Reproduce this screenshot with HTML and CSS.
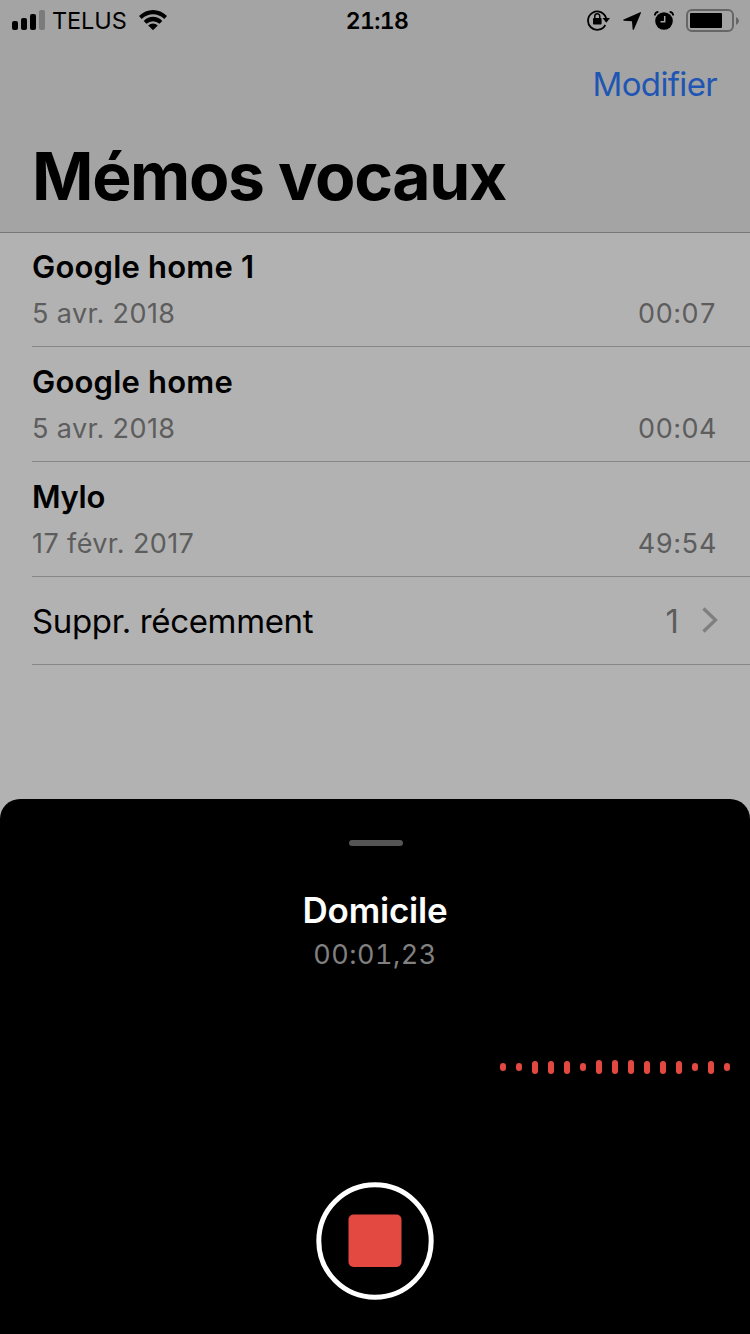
FILE: index.html
```html
<!DOCTYPE html>
<html lang="fr">
<head>
<meta charset="utf-8">
<title>Mémos vocaux</title>
<link rel="stylesheet" href="styles.css">
</head>
<body>
<div class="screen">
  <header class="header">
    <div class="status">
      <div class="status-left">
        <svg class="signal" width="34" height="20" viewBox="0 0 34 20">
          <rect x="0" y="11" width="6" height="9" rx="2"/>
          <rect x="9" y="8" width="6" height="12" rx="2"/>
          <rect x="18" y="4" width="6" height="16" rx="2"/>
          <rect x="27" y="0" width="6" height="20" rx="2" fill="#7b7b7b"/>
        </svg>
        <span class="carrier">TELUS</span>
        <svg class="wifi" width="28" height="20" viewBox="0 0 28 20">
          <path d="M0 6Q6 0 14 0T28 6L25.300 8.900Q20 4.300 14 4.300T2.700 8.900Z"/>
          <path d="M4.700 10.900Q8.800 6.800 14 6.800T23.300 10.900L20.500 13.800Q17.500 11.200 14 11.200T7.500 13.800Z"/>
          <path d="M9.200 15.500Q11.300 13.500 14 13.500T18.800 15.500L14 20.200Z"/>
        </svg>
      </div>
      <span class="clock">21:18</span>
      <div class="status-right">
        <svg class="lock" width="24" height="22" viewBox="0 0 24 22">
          <path d="M18.300 16A9.200 9.200 0 1 1 19.100 9.300" fill="none" stroke="#000" stroke-width="1.800"/>
          <path d="M15.500 9.100H23L19.300 13.700Z"/>
          <rect x="6" y="9" width="8.600" height="6.500" rx="1"/>
          <path d="M7.800 9.500V7.300a2.500 2.500 0 0 1 5 0V9.500" fill="none" stroke="#000" stroke-width="1.500"/>
        </svg>
        <svg class="location" width="18" height="18" viewBox="0 0 18 18">
          <path d="M17.200.300Q18.400-.200 17.900 1L11 17.300Q10 18.700 9.600 17L9 9.200 1 8.700Q-.800 8.200.700 7.400Z"/>
        </svg>
        <svg class="alarm" width="20" height="19" viewBox="0 0 20 19">
          <circle cx="10" cy="10" r="8.800"/>
          <path d="M.8 4.500Q1 1.200 4.400.9M15.600.9Q19 1.200 19.200 4.500" fill="none" stroke="#000" stroke-width="1.800"/>
          <path d="M10.700 5V10.800H6.500" fill="none" stroke="#a4a4a4" stroke-width="1.500"/>
        </svg>
        <svg class="battery" width="53" height="24" viewBox="0 0 53 24">
          <rect x="1" y="1" width="46" height="21" rx="5" fill="none" stroke="#666" stroke-width="2"/>
          <rect x="4" y="4" width="32" height="15" rx="1"/>
          <path d="M50 8Q53 9.500 53 12T50 16Z" fill="#666"/>
        </svg>
      </div>
    </div>
    <div class="nav"><span class="edit">Modifier</span></div>
    <h1 class="title">Mémos vocaux</h1>
  </header>

  <main class="list">
    <div class="memo">
      <div class="name">Google home 1</div>
      <div class="meta"><span class="date">5 avr. 2018</span><span class="length">00:07</span></div>
    </div>
    <div class="memo">
      <div class="name">Google home</div>
      <div class="meta"><span class="date">5 avr. 2018</span><span class="length">00:04</span></div>
    </div>
    <div class="memo">
      <div class="name name-tight">Mylo</div>
      <div class="meta"><span class="date">17 févr. 2017</span><span class="length">49:54</span></div>
    </div>
    <div class="deleted">
      <span class="deleted-label">Suppr. récemment</span>
      <span class="count">1</span>
      <svg class="chevron" width="16" height="26" viewBox="0 0 16 26"><path d="M1.500 1.500L13.500 13L1.500 24.500" fill="none" stroke="#7f7f7f" stroke-width="3.300"/></svg>
    </div>
  </main>

  <section class="sheet">
    <div class="grabber"></div>
    <h2 class="recording">Domicile</h2>
    <div class="elapsed">00:01,23</div>
    <div class="wave">
      <i class="dot"></i><i class="dot"></i><i class="bar"></i><i class="bar"></i><i class="bar"></i><i class="dot"></i><i class="bar tall"></i><i class="bar tall"></i><i class="bar tall"></i><i class="bar"></i><i class="bar"></i><i class="bar"></i><i class="dot"></i><i class="bar"></i><i class="dot"></i>
    </div>
    <svg class="stop" width="118" height="118" viewBox="0 0 118 118">
      <circle cx="59" cy="59" r="56.200" fill="none" stroke="#fff" stroke-width="5"/>
      <rect x="32.500" y="32.500" width="53" height="52.500" rx="5" fill="#e34940"/>
    </svg>
  </section>
</div>
</body>
</html>
```

FILE: styles.css
```css
* { box-sizing: border-box; }
body { margin: 0; }
.screen {
  width: 750px;
  height: 1334px;
  display: flex;
  flex-direction: column;
  background: #b2b2b2;
  color: #000;
  font-family: Inter, "Liberation Sans", sans-serif;
  overflow: hidden;
}
svg { display: block; flex: none; }
span, h1, h2, .name, .elapsed { white-space: nowrap; }

.header {
  height: 233px;
  background: #a4a4a4;
  border-bottom: 1px solid #777;
}
.status {
  height: 40px;
  display: grid;
  grid-template-columns: 1fr auto 1fr;
  align-items: start;
  padding: 0 11px 0 12px;
}
.status-left, .status-right { display: flex; align-items: flex-start; }
.status-right { justify-content: flex-end; }
.signal { margin-top: 10px; }
.carrier { margin: 5px 0 0 6px; width: 75px; font-size: 23.5px; line-height: 32px; letter-spacing: -0.1px; }
.wifi { margin: 10px 0 0 12px; }
.clock { margin: 5px 0 0 3px; font-size: 23px; line-height: 32px; font-weight: 600; font-feature-settings: "tnum"; letter-spacing: -0.6px; }
.lock { margin: 9px 12px 0 0; }
.location { margin: 12px 13px 0 0; }
.alarm { margin: 11px 12px 0 0; }
.battery { margin: 9px 0 0; }
.nav { display: flex; justify-content: flex-end; padding: 24px 33px 0 0; }
.edit { font-size: 33px; line-height: 40px; letter-spacing: -0.65px; color: #1f55b3; }
.title { margin: 32px 0 0 32px; font-size: 66px; line-height: 80px; font-weight: 700; letter-spacing: -1.35px; }

.list { height: 432px; margin-top: -1px; padding-left: 32px; }
.memo { height: 115px; padding: 17px 33px 0 0; border-bottom: 1px solid #868686; }
.name { font-size: 31px; line-height: 36px; font-weight: 600; letter-spacing: 0.2px; }
.name-tight { letter-spacing: -0.3px; }
.meta { display: flex; justify-content: space-between; margin-top: 13px; font-size: 27px; line-height: 32px; color: #5d5d5d; }
.date { letter-spacing: 0.4px; }
.length { letter-spacing: 0.4px; font-feature-settings: "tnum"; }
.deleted { height: 88px; display: flex; align-items: center; padding-right: 32px; border-bottom: 1px solid #868686; }
.deleted-label { flex: 1; font-size: 33px; line-height: 40px; letter-spacing: -0.35px; }
.count { margin-right: 23px; font-size: 33px; line-height: 40px; color: #5d5d5d; }
.chevron { margin-top: -2px; }

.sheet {
  height: 535px;
  margin-top: 135px;
  display: flex;
  flex-direction: column;
  align-items: center;
  background: #000;
  border-radius: 20px 20px 0 0;
}
.grabber { flex: none; width: 54px; height: 6px; margin: 41px 0 0 1px; border-radius: 3px; background: #555; }
.recording { margin: 43px 0 0; font-size: 35px; line-height: 42px; font-weight: 600; letter-spacing: -0.2px; color: #fff; }
.elapsed { margin-top: 8px; font-size: 27px; line-height: 32px; letter-spacing: 0.5px; color: #808080; font-feature-settings: "tnum"; }
.wave { height: 14px; margin: 89px 20px 0 0; align-self: flex-end; display: flex; align-items: center; gap: 10px; }
.wave i { width: 6px; border-radius: 3px; background: #e34940; }
.dot { height: 8px; }
.bar { height: 13px; }
.wave .tall { height: 14px; }
.stop { margin-top: 108px; }
```
